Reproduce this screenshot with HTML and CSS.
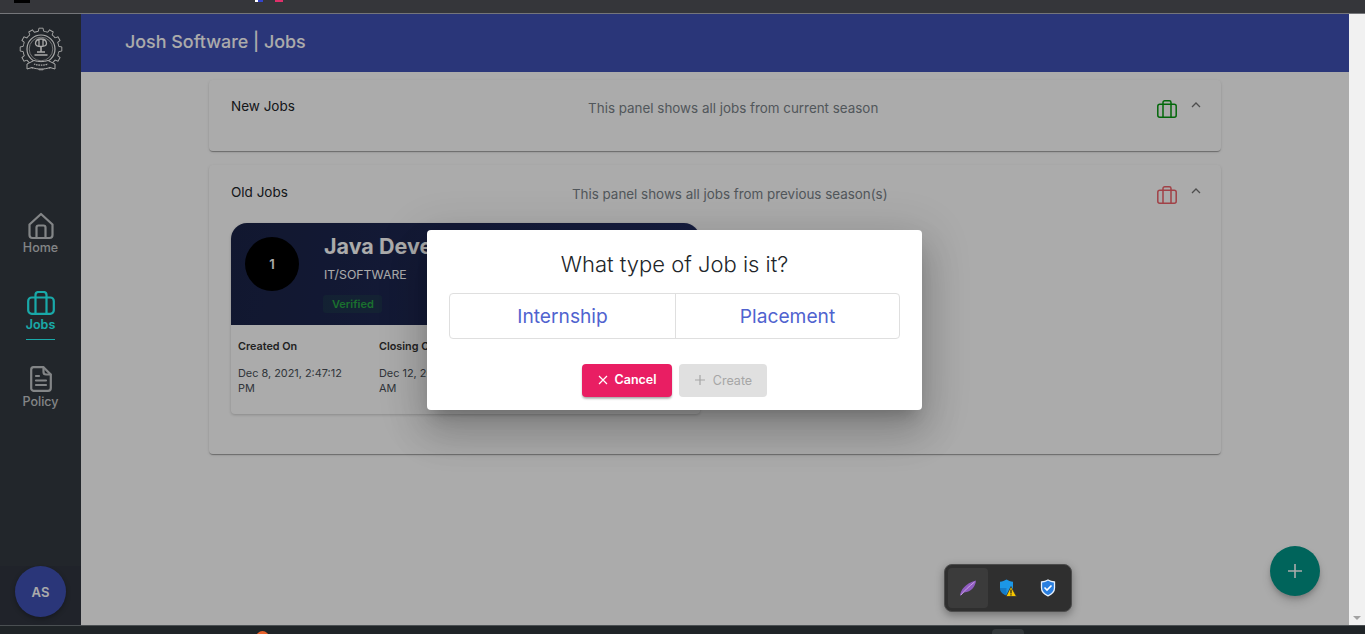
FILE: index.html
```html
<!DOCTYPE html>
<html lang="en">
<head>
    <meta charset="UTF-8">
    <meta name="viewport" content="width=device-width, initial-scale=1.0">
    <title>Josh Software | Jobs</title>
    <link rel="stylesheet" href="styles.css">
</head>
<body>
    <div class="browser-top">
        <span class="browser-favicon"></span>
        <span class="browser-flag"></span>
    </div>

    <div class="window">
        <div class="app">
            <aside class="sidebar">
                <div class="logo">
                    <svg width="44" height="44" viewBox="-22 -22 44 44" fill="none" stroke="#fdfdfd">
                        <defs>
                            <path id="gearTooth" stroke-width=".9" d="M-2.600-17.800L-2.100-20.800H2.100L2.600-17.800A18 18 0 0 1 6.650-16.700"/>
                        </defs>
                        <use href="#gearTooth"/>
                        <use href="#gearTooth" transform="rotate(30)"/>
                        <use href="#gearTooth" transform="rotate(60)"/>
                        <use href="#gearTooth" transform="rotate(90)"/>
                        <use href="#gearTooth" transform="rotate(120)"/>
                        <use href="#gearTooth" transform="rotate(150)"/>
                        <use href="#gearTooth" transform="rotate(180)"/>
                        <use href="#gearTooth" transform="rotate(210)"/>
                        <use href="#gearTooth" transform="rotate(240)"/>
                        <use href="#gearTooth" transform="rotate(270)"/>
                        <use href="#gearTooth" transform="rotate(300)"/>
                        <use href="#gearTooth" transform="rotate(330)"/>
                        <circle r="14" stroke-width="1.200"/>
                        <circle r="11.800" stroke-width=".6"/>
                        <path stroke-width="1.300" d="M-5.500-5.500c0-3 2-4.500 5.500-4.500s5.500 1.500 5.500 4.500c0 2-2 3-5.500 3s-5.500-1-5.500-3zM-2-9.500v6.500M2-9.500v6.500"/>
                        <path stroke-width="1.600" d="M0-2.500v5M-4 3h8M-6.500 6h13"/>
                        <path fill="#343a40" stroke-width="1" d="M-14 15l7-3.500c4 1.500 10 1.500 14 0l7 3.500v5l-5-1.500c-5 2-13 2-18 0l-5 1.500z"/>
                        <path stroke-width="1.300" stroke-dasharray="1.500 .8" d="M-7 15c4 1.500 10 1.500 14 0"/>
                    </svg>
                </div>

                <nav class="nav">
                    <a class="nav-item nav-item-home">
                        <svg class="nav-icon" width="28" height="28" viewBox="0 0 28 28" fill="none" stroke="currentColor" stroke-width="2.200" stroke-linejoin="round">
                            <path d="M2.500 12.500L14 2l11.500 10.500V23a3 3 0 0 1-3 3h-17a3 3 0 0 1-3-3z"/>
                            <path d="M9.500 26V15.500a2 2 0 0 1 2-2h5a2 2 0 0 1 2 2V26"/>
                        </svg>
                        <span>Home</span>
                    </a>
                    <a class="nav-item nav-item-active">
                        <svg class="nav-icon" width="28" height="24" viewBox="0 0 28 24" fill="none" stroke="currentColor" stroke-width="2.200" stroke-linejoin="round">
                            <rect x="1.200" y="6.500" width="25.600" height="16.300" rx="3.500"/>
                            <path d="M8.500 6.500V23M19.500 6.500V23M8.500 6.500V4a3 3 0 0 1 3-3h5a3 3 0 0 1 3 3v2.500"/>
                        </svg>
                        <span>Jobs</span>
                    </a>
                    <a class="nav-item nav-item-policy">
                        <svg class="nav-icon" width="22" height="26" viewBox="0 0 22 26" fill="none" stroke="currentColor" stroke-width="2.200" stroke-linejoin="round" stroke-linecap="round">
                            <path d="M3.500 1.200h10L20.800 8.500V22a2.800 2.800 0 0 1-2.800 2.800H3.500A2.500 2.500 0 0 1 1.200 22V3.700a2.500 2.500 0 0 1 2.300-2.500z"/>
                            <path d="M13.500 1.500V6a2.500 2.500 0 0 0 2.500 2.500h4.500M6 10h3M6 14.500h10M6 19h10"/>
                        </svg>
                        <span>Policy</span>
                    </a>
                </nav>

                <div class="sidebar-footer">
                    <div class="avatar">AS</div>
                </div>
            </aside>

            <div class="content">
                <header class="topbar">Josh Software | Jobs</header>

                <main class="main">
                    <section class="panel panel-new">
                        <div class="panel-head">
                            <div class="panel-title">New Jobs</div>
                            <div class="panel-note">This panel shows all jobs from current season</div>
                            <svg class="panel-icon icon-green" width="20" height="18" viewBox="0 0 20 18" fill="none" stroke="currentColor" stroke-width="1.500" stroke-linejoin="round">
                                <rect x=".8" y="4.300" width="18.400" height="12.900" rx="2"/>
                                <path d="M6 4.300v12.900M14 4.300v12.900M6 4.300V2.500A1.700 1.700 0 0 1 7.700.8h4.600A1.700 1.700 0 0 1 14 2.500v1.800"/>
                            </svg>
                            <svg class="chevron" width="12" height="8" viewBox="0 0 12 8" fill="none" stroke="currentColor" stroke-width="1.300">
                                <path d="M2 6l4-4 4 4"/>
                            </svg>
                        </div>
                    </section>

                    <section class="panel panel-old">
                        <div class="panel-head">
                            <div class="panel-title">Old Jobs</div>
                            <div class="panel-note">This panel shows all jobs from previous season(s)</div>
                            <svg class="panel-icon icon-red" width="20" height="18" viewBox="0 0 20 18" fill="none" stroke="currentColor" stroke-width="1.500" stroke-linejoin="round">
                                <rect x=".8" y="4.300" width="18.400" height="12.900" rx="2"/>
                                <path d="M6 4.300v12.900M14 4.300v12.900M6 4.300V2.500A1.700 1.700 0 0 1 7.700.8h4.600A1.700 1.700 0 0 1 14 2.500v1.800"/>
                            </svg>
                            <svg class="chevron" width="12" height="8" viewBox="0 0 12 8" fill="none" stroke="currentColor" stroke-width="1.300">
                                <path d="M2 6l4-4 4 4"/>
                            </svg>
                        </div>

                        <article class="job-card">
                            <div class="job-head">
                                <div class="job-number">1</div>
                                <div>
                                    <div class="job-title">Java Developer</div>
                                    <div class="job-sector">IT/SOFTWARE</div>
                                    <span class="job-badge">Verified</span>
                                </div>
                            </div>
                            <div class="job-body">
                                <div class="job-col">
                                    <div class="job-label">Created On</div>
                                    <div class="job-value">Dec 8, 2021, 2:47:12 PM</div>
                                </div>
                                <div class="job-col">
                                    <div class="job-label">Closing On</div>
                                    <div class="job-value">Dec 12, 2021, 11:59:00 AM</div>
                                </div>
                            </div>
                        </article>
                    </section>

                    <button class="fab">
                        <svg width="18" height="18" viewBox="0 0 18 18" stroke="currentColor" stroke-width="1.600"><path d="M9 2v14M2 9h14"/></svg>
                    </button>
                </main>
            </div>

            <div class="backdrop">
                <div class="dialog">
                    <h2 class="dialog-title">What type of Job is it?</h2>
                    <div class="choice-group">
                        <button class="choice">Internship</button>
                        <button class="choice">Placement</button>
                    </div>
                    <div class="dialog-actions">
                        <button class="btn btn-cancel">
                            <svg width="10" height="10" viewBox="0 0 10 10" stroke="currentColor" stroke-width="1.200"><path d="M1 1l8 8M9 1l-8 8"/></svg>
                            Cancel
                        </button>
                        <button class="btn btn-create">
                            <svg width="12" height="12" viewBox="0 0 12 12" stroke="currentColor" stroke-width="1.200"><path d="M6 1v10M1 6h10"/></svg>
                            Create
                        </button>
                    </div>
                </div>
            </div>

            <div class="ext-tray">
                <span class="ext-slot ext-slot-active">
                    <svg width="18" height="18" viewBox="0 0 18 18">
                        <path fill="#8f5cc0" d="M1 17C1.500 11 6 4.500 17 1.500 16.500 7.500 12.500 13 5 13.500 3.500 14.500 2.300 15.700 1 17z"/>
                        <path stroke="#d5b3ee" stroke-width=".8" fill="none" d="M2 16C6 11 10 7.500 15.500 3"/>
                    </svg>
                </span>
                <span class="ext-slot">
                    <svg width="18" height="18" viewBox="0 0 18 18">
                        <path fill="#1c97e6" d="M7.500 .5c2 1.300 4 2 6.500 2.200V9c0 3.800-2.600 6-6.500 7.500C3.600 15 1 12.800 1 9V2.700C3.500 2.500 5.500 1.800 7.500 .5z"/>
                        <path fill="#0d5fa8" d="M7.500 .5v16C3.600 15 1 12.800 1 9h6.500z" opacity=".5"/>
                        <path fill="#f8c800" stroke="#333" stroke-width=".8" d="M12 7.500l5.500 10h-10.500z"/>
                        <path stroke="#222" stroke-width="1.200" d="M12 10.500v4M12 15.200v1.200"/>
                    </svg>
                </span>
                <span class="ext-slot">
                    <svg width="16" height="18" viewBox="0 0 16 18" fill="none">
                        <path fill="#2a7fe0" stroke="#e8f1fc" stroke-width="1.300" d="M8 1c2 1.200 4.200 1.800 6.500 2v6c0 3.700-2.700 6.100-6.500 7.800C4.200 15.100 1.500 12.700 1.500 9V3C3.800 2.800 6 2.200 8 1z"/>
                        <path stroke="#fff" stroke-width="1.600" d="M4.500 8.500l2.500 2.500 4.500-4.500"/>
                    </svg>
                </span>
            </div>
        </div>

        <div class="scrollbar">
            <span class="scroll-arrow"></span>
        </div>
    </div>

    <div class="browser-bottom">
        <span class="browser-dot"></span>
        <span class="browser-tab"></span>
    </div>
</body>
</html>
```

FILE: styles.css
```css
* {
    margin: 0;
    padding: 0;
    box-sizing: border-box;
}

html, body {
    height: 100%;
    overflow: hidden;
}

body {
    display: flex;
    flex-direction: column;
    background: #fafafa;
    font-family: 'Inter', 'Liberation Sans', sans-serif;
    color: #212529;
}

/* Browser chrome cut off by the screenshot */
.browser-top {
    display: flex;
    flex: 0 0 14px;
    padding-left: 14px;
    background: #35363a;
    border-bottom: 1px solid #75767a;
}

.browser-favicon {
    width: 16px;
    height: 3px;
    background: #000000;
}

.browser-flag {
    width: 28px;
    height: 2px;
    margin-left: 225px;
    background: linear-gradient(90deg, #ffffff 0 12%, #3344cc 12% 30%, transparent 30% 70%, #e0306a 70% 100%);
}

.browser-bottom {
    position: relative;
    flex: 0 0 9px;
    background: #1f2427;
    border-top: 1px solid #4a4f52;
    overflow: hidden;
}

.browser-dot {
    position: absolute;
    left: 256px;
    top: 5px;
    width: 13px;
    height: 13px;
    border-radius: 50%;
    background: #e8622c;
}

.browser-tab {
    position: absolute;
    left: 992px;
    top: 3px;
    width: 32px;
    height: 10px;
    border-radius: 4px;
    background: #33383b;
}

.window {
    display: flex;
    flex: 1;
    min-height: 0;
}

.app {
    position: relative;
    display: flex;
    flex: 1;
    min-width: 0;
}

.scrollbar {
    position: relative;
    flex: 0 0 16px;
    background: #f1f1f1;
}

.scroll-arrow {
    position: absolute;
    left: 4px;
    bottom: 5px;
    border-left: 4px solid transparent;
    border-right: 4px solid transparent;
    border-top: 4px solid #a3a3a3;
}

/* Sidebar */
.sidebar {
    display: flex;
    flex-direction: column;
    flex: 0 0 81px;
    background: #343a40;
    color: #c4c7ca;
}

.logo {
    display: flex;
    justify-content: center;
    padding-top: 13px;
    height: 198px;
}

.nav {
    display: flex;
    flex-direction: column;
    flex: 1;
    align-items: center;
    gap: 26px;
}

.nav-item {
    display: flex;
    flex-direction: column;
    align-items: center;
    gap: 1px;
    font-size: 12.500px;
    font-weight: 500;
    line-height: 16px;
}

.nav-item-home .nav-icon {
    margin-bottom: -1px;
}

.nav-item-policy .nav-icon {
    margin-bottom: 1px;
}

.nav-item-active {
    margin-top: 9px;
    padding-bottom: 6px;
    color: #26fdfd;
    border-bottom: 1px solid #26fdfd;
    font-weight: 600;
    width: 29px;
}

.nav-item-active .nav-icon {
    margin-bottom: 1px;
}

.nav-icon {
    display: block;
    flex-shrink: 0;
}

.sidebar-footer {
    display: flex;
    justify-content: center;
    padding: 0 0 8px;
    background: #30353f;
}

.avatar {
    display: flex;
    align-items: center;
    justify-content: center;
    width: 51px;
    height: 51px;
    border-radius: 50%;
    background: #3f51b5;
    color: #ffffff;
    font-size: 13px;
    font-weight: 600;
    box-shadow: 0 2px 5px rgba(0, 0, 0, 0.3);
}

/* Main area */
.content {
    display: flex;
    flex-direction: column;
    flex: 1;
    min-width: 0;
}

.topbar {
    flex: 0 0 58px;
    padding-left: 44px;
    background: #3f51b5;
    color: #ffffff;
    font-size: 17.900px;
    font-weight: 500;
    line-height: 56px;
}

.main {
    position: relative;
    flex: 1;
    padding: 8px 128px 0;
    background: #ffffff;
}

.panel {
    position: relative;
    background: #ffffff;
    border-radius: 4px;
    box-shadow: 0 2px 1px -1px rgba(0, 0, 0, 0.2), 0 1px 1px rgba(0, 0, 0, 0.14), 0 1px 3px rgba(0, 0, 0, 0.12);
}

.panel-new {
    height: 71px;
    margin-bottom: 14px;
}

.panel-old {
    height: 289px;
}

.panel-head {
    display: flex;
    align-items: flex-start;
    height: 58px;
    padding: 18px 19px 0 22px;
}

.panel-old .panel-head {
    padding-top: 19px;
}

.panel-title {
    flex: 0 0 33%;
    font-size: 13.500px;
    line-height: 17px;
}

.panel-note {
    flex: 1;
    padding-top: 2px;
    padding-right: 242px;
    text-align: center;
    color: #7a8288;
    font-size: 13.400px;
    line-height: 16px;
}

.panel-old .panel-note {
    padding-right: 249px;
}

.panel-icon {
    flex-shrink: 0;
    margin-top: 2px;
}

.icon-green {
    color: #049a0f;
}

.icon-red {
    color: #f0626a;
}

.chevron {
    flex-shrink: 0;
    margin: 3px 0 0 13px;
    color: #757575;
}

/* Job card */
.job-card {
    width: 469px;
    height: 191px;
    margin-left: 22px;
    border-radius: 16px 16px 4px 4px;
    box-shadow: 0 1px 3px rgba(0, 0, 0, 0.2);
    overflow: hidden;
}

.job-head {
    display: flex;
    gap: 25px;
    height: 102px;
    padding: 14px;
    background: linear-gradient(100deg, #1a2347, #232d60);
    color: #ffffff;
}

.job-number {
    display: flex;
    flex: 0 0 54px;
    align-items: center;
    justify-content: center;
    height: 54px;
    border-radius: 50%;
    background: #000000;
    font-size: 13px;
    font-weight: 600;
}

.job-title {
    margin-top: -1px;
    font-size: 21.500px;
    font-weight: 700;
    line-height: 20px;
    white-space: nowrap;
}

.job-sector {
    margin-top: 11px;
    font-size: 12.300px;
    line-height: 16px;
}

.job-badge {
    display: inline-block;
    margin: 12px 0 0 -1px;
    padding: 0 8px 0 9px;
    border-radius: 3px;
    background: rgba(40, 167, 69, 0.1);
    color: #28a745;
    font-size: 11px;
    font-weight: 600;
    line-height: 18px;
}

.job-body {
    display: flex;
    padding: 15px 7px;
    background: #ffffff;
}

.job-col {
    flex: 0 0 141px;
    padding-right: 22px;
}

.job-label {
    margin-bottom: 12px;
    color: #333333;
    font-size: 10.800px;
    font-weight: 600;
    line-height: 14px;
}

.job-value {
    color: #495057;
    font-size: 10.900px;
    line-height: 15px;
}

.fab {
    position: absolute;
    right: 29px;
    bottom: 29px;
    display: flex;
    align-items: center;
    justify-content: center;
    width: 50px;
    height: 50px;
    border: none;
    border-radius: 50%;
    background: #009688;
    color: #ffffff;
    box-shadow: 0 3px 5px -1px rgba(0, 0, 0, 0.2), 0 6px 10px rgba(0, 0, 0, 0.14);
}

/* Dialog */
.backdrop {
    position: absolute;
    inset: 0;
    display: flex;
    align-items: center;
    justify-content: center;
    background: rgba(0, 0, 0, 0.33);
}

.dialog {
    width: 495px;
    height: 180px;
    padding: 20px 22px 0;
    border-radius: 4px;
    background: #ffffff;
    box-shadow: 0 11px 15px -7px rgba(0, 0, 0, 0.2), 0 24px 38px 3px rgba(0, 0, 0, 0.14), 0 9px 46px 8px rgba(0, 0, 0, 0.12);
}

.dialog-title {
    margin-bottom: 15px;
    color: #212529;
    font-size: 22px;
    font-weight: 300;
    line-height: 28px;
    text-align: center;
}

.choice-group {
    display: flex;
    height: 46px;
    border: 1px solid #dfdfdf;
    border-radius: 4px;
}

.choice {
    flex: 1 1 50%;
    border: none;
    background: none;
    color: #5063cf;
    font-family: inherit;
    font-size: 19.200px;
    font-weight: 400;
}

.choice:first-child {
    flex: 0 0 225px;
}

.choice + .choice {
    border-left: 1px solid #dfdfdf;
}

.dialog-actions {
    display: flex;
    justify-content: center;
    gap: 7px;
    margin-top: 25px;
}

.btn {
    display: flex;
    align-items: center;
    justify-content: center;
    gap: 7px;
    height: 33px;
    border: none;
    border-radius: 4px;
    font-family: inherit;
    font-size: 12.500px;
}

.btn-cancel {
    width: 90px;
    padding-bottom: 1px;
    background: #e91e63;
    color: #ffffff;
    font-weight: 600;
    box-shadow: 0 2px 3px -1px rgba(0, 0, 0, 0.3), 0 2px 2px rgba(0, 0, 0, 0.14);
}

.btn-create {
    width: 88px;
    background: #e0e0e0;
    color: #a6a6a6;
}

/* Browser extension tray, sits on top of everything */
.ext-tray {
    position: absolute;
    left: 944px;
    top: 550px;
    display: flex;
    align-items: center;
    width: 128px;
    height: 48px;
    padding: 3px;
    border: 1px solid #4c4c4c;
    border-radius: 8px;
    background: #2f2f2f;
    box-shadow: 0 3px 8px rgba(0, 0, 0, 0.35);
}

.ext-slot {
    display: flex;
    align-items: center;
    justify-content: center;
    flex: 0 0 40px;
    height: 40px;
    border-radius: 4px;
}

.ext-slot-active {
    background: #3b3b3b;
}
```
